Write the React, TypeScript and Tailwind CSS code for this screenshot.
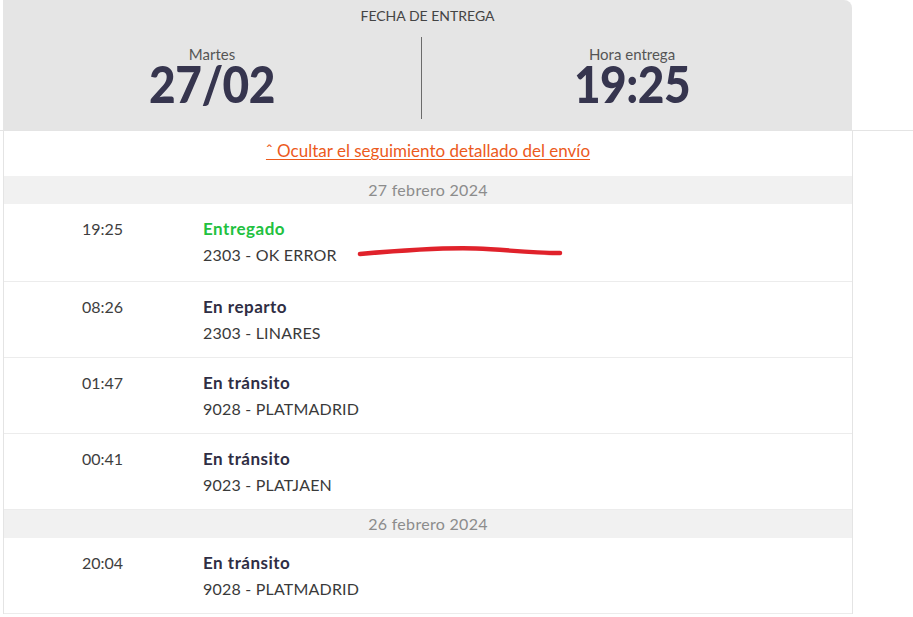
import type React from 'react';

type TrackingEvent = {
  time: string;
  title: string;
  place: string;
  delivered?: boolean;
};

type TrackingDay = {
  label: string;
  events: TrackingEvent[];
};

const days: TrackingDay[] = [
  {
    label: '27 febrero 2024',
    events: [
      { time: '19:25', title: 'Entregado', place: '2303 - OK ERROR', delivered: true },
      { time: '08:26', title: 'En reparto', place: '2303 - LINARES' },
      { time: '01:47', title: 'En tránsito', place: '9028 - PLATMADRID' },
      { time: '00:41', title: 'En tránsito', place: '9023 - PLATJAEN' },
    ],
  },
  {
    label: '26 febrero 2024',
    events: [{ time: '20:04', title: 'En tránsito', place: '9028 - PLATMADRID' }],
  },
];

// hand-drawn red mark over the first row
const Scribble: React.FC = () => (
  <svg
    className="pointer-events-none absolute left-[352px] top-[41px]"
    width="208"
    height="14"
    viewBox="0 0 208 14"
  >
    <path
      d="M4 9 C 50 5, 90 2.5, 120 3.5 S 170 8, 204 8"
      fill="none"
      stroke="#e0222b"
      strokeWidth="4.5"
      strokeLinecap="round"
    />
  </svg>
);

const EventRow: React.FC<{ event: TrackingEvent; tall?: boolean }> = ({ event, tall }) => (
  <div
    className={`relative flex border-b border-[#ececec] pt-[12px] text-[16px] leading-[26px] ${
      tall ? 'h-[78px]' : 'h-[76px]'
    }`}
  >
    <div className="w-[199px] pl-[78px] text-[#3e3e3e]">{event.time}</div>
    <div>
      <div
        className={
          event.delivered
            ? 'text-[17px] font-bold tracking-[0.5px] text-[#22c140]'
            : 'text-[17px] font-bold tracking-[0.5px] text-[#2f2e44]'
        }
      >
        {event.title}
      </div>
      <div className="tracking-[0.2px] text-[#3a3a3a]">{event.place}</div>
    </div>
    {event.delivered && <Scribble />}
  </div>
);

const HeaderColumn: React.FC<{ label: string; value: string; width: string }> = ({
  label,
  value,
  width,
}) => (
  <div className={`flex flex-col items-center ${width}`}>
    <div className="mt-[10px] text-[15px] leading-[14px] text-[#555]">{label}</div>
    <div className="mt-[2px] inline-block scale-y-[1.12] text-[46px] font-black leading-[42px] tracking-[-0.5px]">
      {value}
    </div>
  </div>
);

export default function App() {
  return (
    <div className="min-h-[617px] w-full overflow-hidden bg-white font-['Lato',sans-serif]">
      <div className="ml-[3px] w-[849px] rounded-tr-lg bg-[#e5e5e5] text-[#36354e]">
        <div className="pt-[8px] text-center text-[14px] leading-[16px] text-[#444]">
          FECHA DE ENTREGA
        </div>
        <div className="flex h-[106px] pt-[13px]">
          <HeaderColumn label="Martes" value="27/02" width="w-[418px]" />
          <div className="h-[82px] w-px bg-[#6b6b6b]" />
          <HeaderColumn label="Hora entrega" value="19:25" width="w-[420px]" />
        </div>
      </div>
      <div className="border-t border-[#e4e4e4]">
        <div className="ml-[3px] w-[850px] border-x border-[#e4e4e4]">
          <div className="h-[45px] pt-[8px] text-center">
            <a
              href="#"
              className="text-[17px] leading-[20px] text-[#ec5a1c] underline underline-offset-2"
            >
              ˆ Ocultar el seguimiento detallado del envío
            </a>
          </div>
          {days.map((day, d) => (
            <div key={day.label}>
              <div className="flex h-[28px] items-center justify-center bg-[#f1f1f1] text-[16px] tracking-[0.3px] text-[#8c8c8c]">
                {day.label}
              </div>
              {day.events.map((event, i) => (
                <EventRow key={event.time} event={event} tall={d === 0 && i === 0} />
              ))}
            </div>
          ))}
        </div>
      </div>
    </div>
  );
}
